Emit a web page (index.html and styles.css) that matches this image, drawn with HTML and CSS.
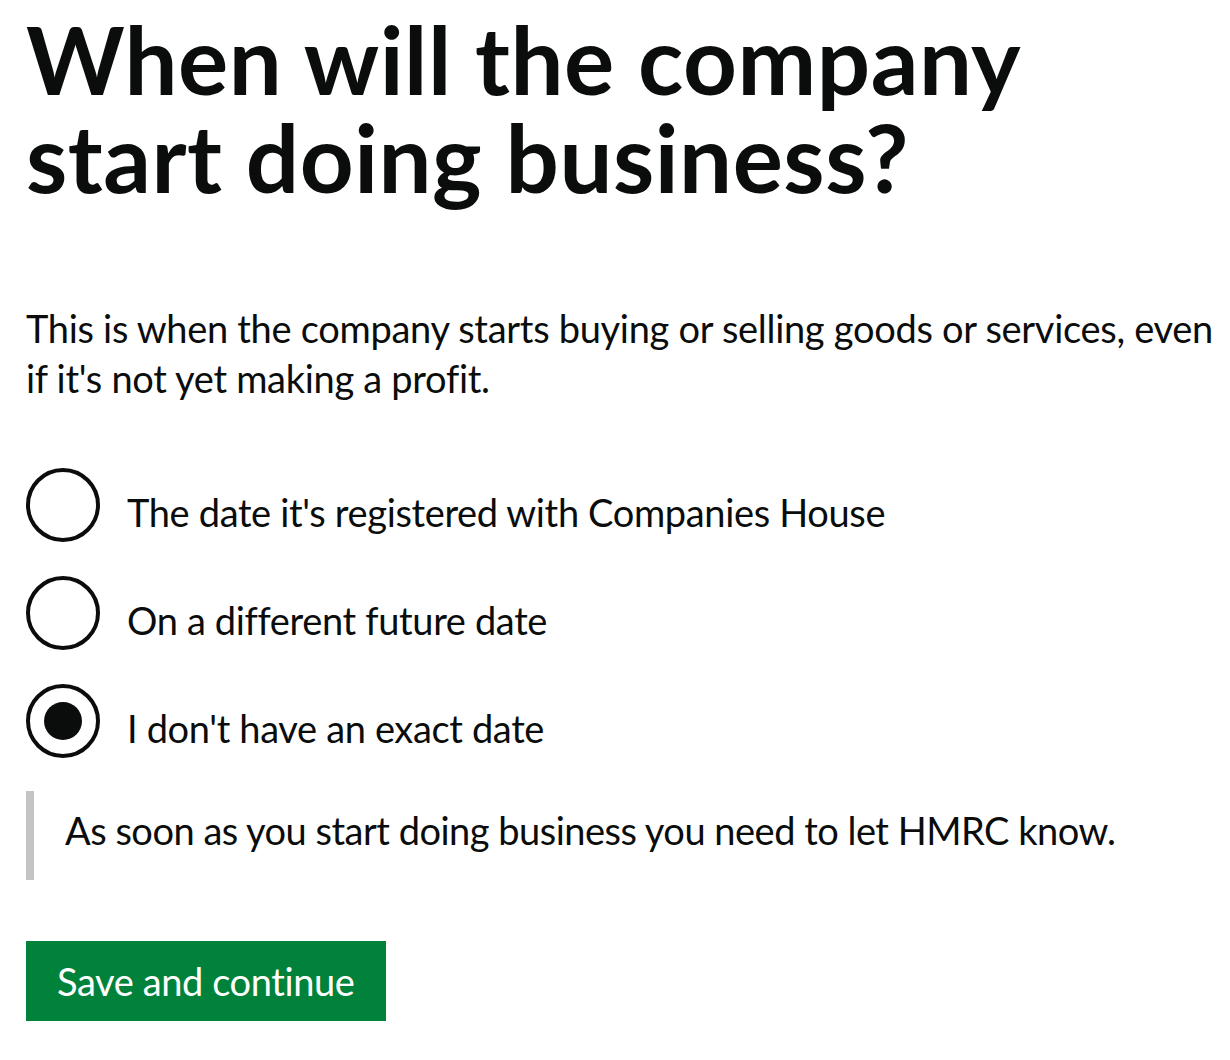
FILE: index.html
```html
<!DOCTYPE html>
<html lang="en">
<head>
<meta charset="utf-8">
<title>When will the company start doing business?</title>
<link rel="stylesheet" href="styles.css">
</head>
<body>
<main class="page">
  <h1 class="heading">When will the company start doing business?</h1>
  <p class="hint">This is when the company starts buying or selling goods or services, even if it's not yet making a profit.</p>
  <div class="radios">
    <label class="radio">
      <span class="radio-circle"></span>
      <span class="radio-label">The date it's registered with Companies House</span>
    </label>
    <label class="radio">
      <span class="radio-circle"></span>
      <span class="radio-label">On a different future date</span>
    </label>
    <label class="radio">
      <span class="radio-circle radio-circle--checked"></span>
      <span class="radio-label">I don't have an exact date</span>
    </label>
  </div>
  <div class="inset">As soon as you start doing business you need to let HMRC know.</div>
  <button class="button" type="button">Save and continue</button>
</main>
</body>
</html>
```

FILE: styles.css
```css
html, body {
  margin: 0;
  padding: 0;
  background: #ffffff;
}

body {
  font-family: Lato, "Liberation Sans", Arial, sans-serif;
  color: #0b0c0c;
}

.page {
  box-sizing: border-box;
  width: 1222px;
  padding: 10px 0 0 26px;
}

.heading {
  margin: 0;
  font-size: 94px;
  line-height: 98px;
  font-weight: 700;
  letter-spacing: 0.5px;
}

.hint {
  margin: 97px 0 0;
  font-size: 38px;
  line-height: 50px;
  letter-spacing: -0.3px;
}

.radios {
  margin-top: 65px;
  display: flex;
  flex-direction: column;
  gap: 34px;
}

.radio {
  display: flex;
  align-items: flex-start;
  height: 74px;
}

.radio-circle {
  box-sizing: border-box;
  width: 74px;
  height: 74px;
  flex: 0 0 74px;
  border: 4px solid #0b0c0c;
  border-radius: 50%;
  display: flex;
  align-items: center;
  justify-content: center;
}

.radio-circle--checked::after {
  content: "";
  width: 38px;
  height: 38px;
  border-radius: 50%;
  background: #0b0c0c;
}

.radio-label {
  margin-left: 27px;
  padding-top: 19px;
  font-size: 38px;
  line-height: 50px;
  letter-spacing: -0.35px;
}

.inset {
  margin-top: 33px;
  border-left: 8px solid #c4c4c4;
  padding: 14px 0 25px 31px;
  font-size: 38px;
  line-height: 50px;
  letter-spacing: -0.5px;
}

.button {
  box-sizing: border-box;
  margin-top: 61px;
  display: block;
  border: 0;
  border-radius: 0;
  background: #00823b;
  color: #ffffff;
  font-family: inherit;
  font-size: 38px;
  line-height: 50px;
  padding: 15px 0 15px 31px;
  width: 360px;
  text-align: left;
  white-space: nowrap;
  letter-spacing: -0.4px;
  box-shadow: 0 4px 0 #003418;
  cursor: pointer;
}
```
